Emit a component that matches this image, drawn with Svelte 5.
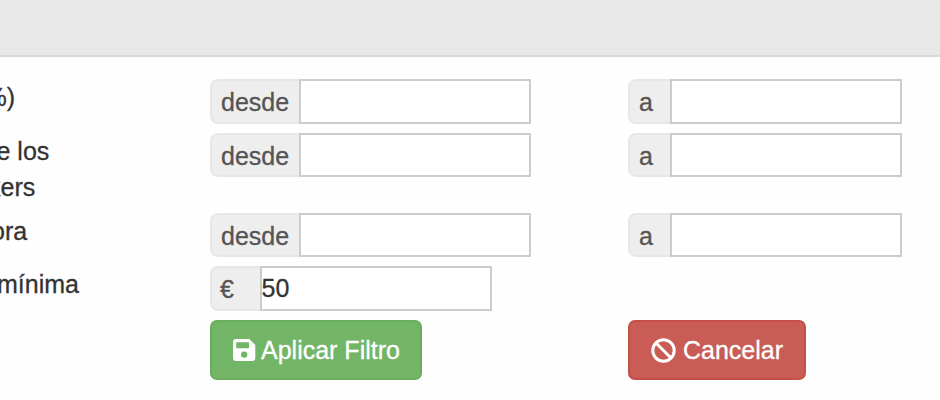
<script>
  const rows = [
    { lines: [{ text: '%)', shift: -15.5 }], height: 53.5, range: true },
    { lines: [{ text: 'e los', shift: -3.5 }, { text: 'kers', shift: -12 }], height: 80, range: true },
    { lines: [{ text: 'ora', shift: -9 }], height: 53.5, range: true },
    { lines: [{ text: 'mínima', shift: -3 }], height: 54, range: false }
  ];
</script>

<div class="page">
  <header></header>
  <main>
    {#each rows as row}
      <div class="row" style="height: {row.height}px">
        <div class="label">
          {#each row.lines as line}
            <div style="margin-left: {line.shift}px">{line.text}</div>
          {/each}
        </div>
        {#if row.range}
          <div class="group first">
            <span class="addon desde">desde</span><input type="text" aria-label="desde" />
          </div>
          <div class="group">
            <span class="addon a">a</span><input type="text" aria-label="a" />
          </div>
        {:else}
          <div class="group first">
            <span class="addon euro">€</span><input type="text" value="50" aria-label="€" />
          </div>
        {/if}
      </div>
    {/each}
    <div class="row">
      <div class="label"></div>
      <div class="first">
        <button class="apply">
          <svg width="23" height="22" viewBox="0 0 23 22">
            <path fill="#fff" fill-rule="evenodd" d="M3 0H16.3L22.3 6V19Q22.3 22 19.3 22H3Q0 22 0 19V3Q0 0 3 0ZM4 3.2Q3.2 3.2 3.2 4V8.4Q3.2 9.2 4 9.2H15.2Q16 9.2 16 8.4V4Q16 3.2 15.2 3.2ZM11.2 12.4A3.2 3.2 0 1 0 11.2 18.8A3.2 3.2 0 1 0 11.2 12.4Z" />
          </svg>
          <span>Aplicar Filtro</span>
        </button>
      </div>
      <div>
        <button class="cancel">
          <svg width="25" height="25" viewBox="0 0 25 25">
            <circle cx="12.5" cy="12.5" r="10.7" fill="none" stroke="#fff" stroke-width="3" />
            <path d="M5 5L20 20" stroke="#fff" stroke-width="3" />
          </svg>
          <span>Cancelar</span>
        </button>
      </div>
    </div>
  </main>
</div>

<style>
  :global(body) {
    background: #fefefe;
  }
  .page {
    width: 940px;
    height: 400px;
    overflow: hidden;
    font-family: 'Liberation Sans', Arial, sans-serif;
    font-size: 25px;
    color: #333;
    -webkit-text-stroke: 0.3px currentColor;
  }
  header {
    box-sizing: border-box;
    height: 57px;
    background: #e8e8e8;
    border-bottom: 2px solid #d9d9d9;
  }
  main {
    padding-top: 22px;
  }
  .row {
    display: flex;
    align-items: flex-start;
  }
  .label {
    width: 210px;
    flex: none;
    line-height: 36px;
    white-space: nowrap;
  }
  .first {
    width: 418px;
    flex: none;
  }
  .group {
    display: flex;
    height: 44.5px;
  }
  .addon {
    box-sizing: border-box;
    height: 44.5px;
    line-height: 42px;
    padding-left: 9px;
    background: #eee;
    border: 2px solid #e7e7e7;
    border-right: 0;
    border-radius: 8px 0 0 8px;
    color: #555;
  }
  .desde {
    width: 89px;
  }
  .a {
    width: 42px;
  }
  .euro {
    width: 49.5px;
    padding-left: 8px;
  }
  input {
    box-sizing: border-box;
    width: 232px;
    height: 44.5px;
    margin: 0;
    padding: 1px 0 0;
    border: 2px solid #ccc;
    border-radius: 0;
    background: #fff;
    color: #333;
    font: inherit;
    outline: 0;
  }
  button {
    box-sizing: border-box;
    display: flex;
    align-items: center;
    height: 60px;
    margin: 0;
    padding: 0 0 0 21px;
    border: 2px solid;
    border-radius: 7px;
    color: #fff;
    font: inherit;
    white-space: nowrap;
  }
  svg {
    flex: none;
    display: block;
  }
  .apply {
    width: 212px;
    background: #73b566;
    border-color: #69ae5d;
  }
  .apply span {
    margin-left: 5px;
  }
  .cancel {
    width: 178px;
    background: #c95c54;
    border-color: #c45049;
  }
  .cancel span {
    margin-left: 7px;
  }
</style>
